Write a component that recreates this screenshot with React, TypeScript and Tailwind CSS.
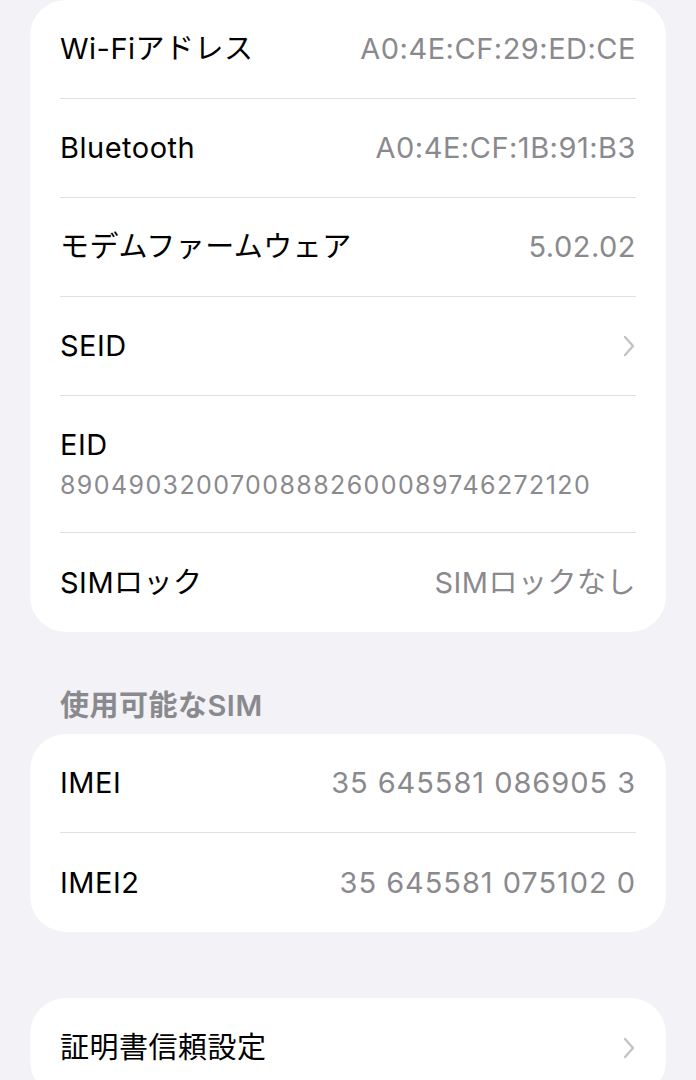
import React from "react";

const font = { fontFamily: '"Inter", "Noto Sans CJK JP", sans-serif' };

function Chevron() {
  return (
    <svg width="14" height="24" viewBox="0 0 14 24" fill="none">
      <polyline points="3,3 11,12 3,21" stroke="#c4c4c7" strokeWidth="2.4" strokeLinecap="round" strokeLinejoin="round" />
    </svg>
  );
}

function Row({ label, value, chevron, last, wide }: { label: string; value?: string; chevron?: boolean; last?: boolean; wide?: boolean }) {
  return (
    <div className={`flex h-[99px] items-center justify-between ${last ? "" : "border-b border-[#e0e0e3]"}`}>
      <span className="text-[29px] text-black tracking-[0.5px]">{label}</span>
      {value && (
        <span className={`text-[29px] text-[#8a8a8e] ${wide ? "tracking-[0.95px]" : "tracking-[0.5px]"}`}>{value}</span>
      )}
      {chevron && <Chevron />}
    </div>
  );
}

export default function App() {
  return (
    <div className="min-h-screen bg-[#f2f2f7] px-[30px] pb-10" style={font}>
      <div className="rounded-[36px] bg-white px-[30px]">
        <Row label="Wi-Fiアドレス" value="A0:4E:CF:29:ED:CE" />
        <Row label="Bluetooth" value="A0:4E:CF:1B:91:B3" />
        <Row label="モデムファームウェア" value="5.02.02" />
        <Row label="SEID" chevron />
        <div className="flex h-[137px] flex-col justify-center border-b border-[#e0e0e3]">
          <span className="text-[29px] leading-[36px] text-black tracking-[0.5px]">EID</span>
          <span className="mt-[6px] text-[25px] leading-[32px] text-[#8a8a8e] tracking-[1.4px]">89049032007008882600089746272120</span>
        </div>
        <Row label="SIMロック" value="SIMロックなし" last />
      </div>
      <div className="px-[30px] pt-[58px] pb-[12px] text-[29px] leading-[32px] font-semibold text-[#8a8a8e] tracking-[0.5px]">使用可能なSIM</div>
      <div className="rounded-[36px] bg-white px-[30px]">
        <Row label="IMEI" value="35 645581 086905 3" wide />
        <Row label="IMEI2" value="35 645581 075102 0" wide last />
      </div>
      <div className="mt-[66px] rounded-[36px] bg-white px-[30px]">
        <Row label="証明書信頼設定" chevron last />
      </div>
    </div>
  );
}
